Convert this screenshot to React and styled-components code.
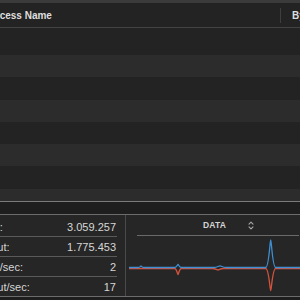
import React from 'react';
import styled, { createGlobalStyle } from 'styled-components';

const GlobalStyle = createGlobalStyle`
    html, body {
        margin: 0;
        padding: 0;
        background: #1e1e1e;
        overflow: hidden;
    }
    body {
        font-family: "Liberation Sans", Arial, sans-serif;
    }
`;

// the window is wider than the viewport, the screenshot only shows a part of it
const Window = styled.div`
    width: 420px;
    height: 300px;
    margin-left: -60px;
    display: flex;
    flex-direction: column;
    background: #232323;
`;

const TopBar = styled.div`
    height: 3px;
    background: #3b3b3b;
`;

const Header = styled.div`
    height: 24px;
    display: flex;
    align-items: center;
    background: #232323;
    border-bottom: 1px solid #434343;
`;

const HeaderCell = styled.div`
    width: ${(props) => props.width || 'auto'};
    padding-left: ${(props) => props.pad}px;
    font-size: 10px;
    font-weight: bold;
    color: #dedede;
    white-space: nowrap;
    box-sizing: border-box;
`;

const HeaderDivider = styled.div`
    width: 1px;
    height: 15px;
    background: #3e3e3e;
`;

const TableBody = styled.div`
    height: 174px;
    padding-top: 4.7px;
    box-sizing: border-box;
    overflow: hidden;
    background: #232323;
    border-bottom: 1px solid #7a7a7a;
`;

const Row = styled.div`
    height: 22.3px;
    background: ${(props) => (props.striped ? '#2c2c2c' : '#232323')};
`;

const Band = styled.div`
    height: 12px;
    background: #1e1e1e;
    border-bottom: 1px solid #6c6c6c;
`;

const BottomPanel = styled.div`
    height: 81px;
    display: flex;
    background: #262626;
    border-bottom: 1px solid #6c6c6c;
`;

const Stats = styled.div`
    width: 177px;
    flex-shrink: 0;
    padding-top: 2px;
    box-sizing: border-box;
`;

const StatRow = styled.div`
    height: 19px;
    display: flex;
    align-items: center;
    justify-content: space-between;
    padding: 0 1px 0 9px;
    font-size: 11px;
    color: #d6d6d6;
    border-bottom: ${(props) => (props.last ? 'none' : '1px solid #5a5a5a')};
`;

const VDivider = styled.div`
    width: 1px;
    flex-shrink: 0;
    margin-left: 8px;
    background: #4a4a4a;
`;

const ChartPanel = styled.div`
    flex: 1;
    min-width: 0;
    display: flex;
    flex-direction: column;
`;

const ChartHeader = styled.div`
    height: 20px;
    margin: 0 61px 0 11px;
    padding-left: 66px;
    display: flex;
    align-items: center;
    gap: 22px;
    border-bottom: 1px solid #6a6a6a;
`;

const ChartTitle = styled.span`
    font-size: 8.5px;
    font-weight: bold;
    color: #d4d4d4;
    letter-spacing: 0.2px;
`;

const Footer = styled.div`
    flex: 1;
    background: #1e1e1e;
`;

const stats = [
    ['Packets in:', '3.059.257'],
    ['Packets out:', '1.775.453'],
    ['Packets in/sec:', '2'],
    ['Packets out/sec:', '17'],
];

function Chevrons() {
    return (
        <svg width="6" height="9" viewBox="0 0 6 9" fill="none" stroke="#a8a8a8" strokeWidth="1.1" strokeLinecap="round" strokeLinejoin="round">
            <path d="M1 3.2 L3 1.2 L5 3.2" />
            <path d="M1 5.8 L3 7.8 L5 5.8" />
        </svg>
    );
}

function spike(x, base, peak, half) {
    return `L${x - half} ${base} C${x - half * 0.35} ${base} ${x - half * 0.15} ${peak} ${x} ${peak} C${x + half * 0.15} ${peak} ${x + half * 0.35} ${base} ${x + half} ${base}`;
}

function Chart() {
    const blue = `M3 31.5 L12 31.5 ${spike(15, 31.5, 30, 3)} ${spike(52, 31.5, 28.5, 3.5)} ${spike(94, 31.5, 29.8, 7)} ${spike(144.7, 31.5, 4, 5)} L180 31.5`;
    const red = `M3 32.5 L12 32.5 ${spike(52, 32.5, 38.5, 3.5)} ${spike(92, 32.5, 34, 6)} ${spike(144.7, 32.5, 54.5, 5)} L180 32.5`;
    return (
        <svg width="180" height="60" viewBox="0 0 180 60">
            <path d={red} fill="none" stroke="#d2533d" strokeWidth="1.3" />
            <path d={blue} fill="none" stroke="#3f8fd4" strokeWidth="1.3" />
        </svg>
    );
}

export default function App() {
    return (
        <>
            <GlobalStyle />
            <Window>
                <TopBar />
                <Header>
                    <HeaderCell width="340px" pad={43}>Process Name</HeaderCell>
                    <HeaderDivider />
                    <HeaderCell pad={11}>Bytes Sent</HeaderCell>
                </Header>
                <TableBody>
                    {Array.from({ length: 8 }).map((_, i) => (
                        <Row key={i} striped={i % 2 === 1} />
                    ))}
                </TableBody>
                <Band />
                <BottomPanel>
                    <Stats>
                        {stats.map(([label, value], i) => (
                            <StatRow key={label} last={i === stats.length - 1}>
                                <span>{label}</span>
                                <span>{value}</span>
                            </StatRow>
                        ))}
                    </Stats>
                    <VDivider />
                    <ChartPanel>
                        <ChartHeader>
                            <ChartTitle>DATA</ChartTitle>
                            <Chevrons />
                        </ChartHeader>
                        <Chart />
                    </ChartPanel>
                </BottomPanel>
                <Footer />
            </Window>
        </>
    );
}
